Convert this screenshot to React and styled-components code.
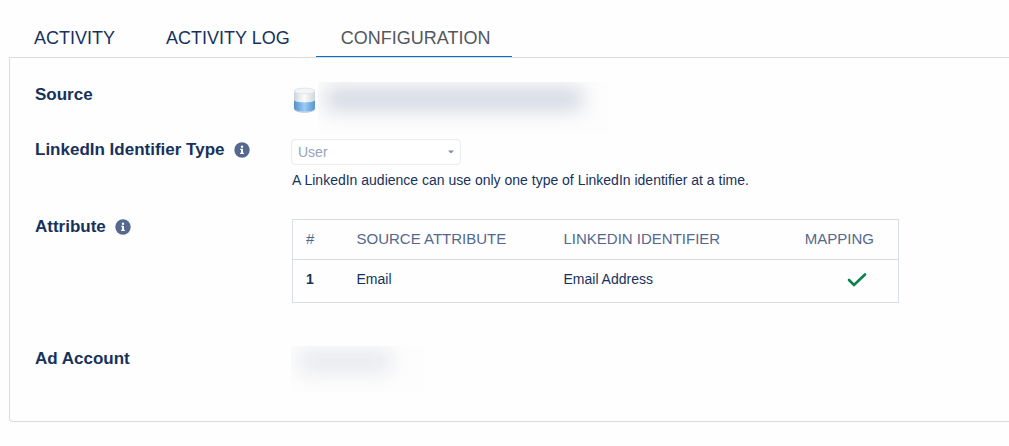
import React from 'react'
import styled, { createGlobalStyle } from 'styled-components'

const GlobalStyle = createGlobalStyle`
    * {
        box-sizing: border-box;
    }

    body {
        margin: 0;
        background: #fefefe;
        color: #16325c;
        font-family: "Liberation Sans", Arial, sans-serif;
        font-size: 14px;
        line-height: 20px;
    }
`

const Page = styled.main`
    padding: 18px 0 24px 9px;
`

const TabList = styled.nav`
    display: flex;
    gap: 4px;
`

const Tab = styled.a`
    height: 39px;
    padding: 0 22px 0 25px;
    border-bottom: 1px solid ${props => props.$active ? '#0070d2' : 'transparent'};
    color: ${props => props.$active ? '#54575c' : '#16325c'};
    font-size: 18px;
    line-height: 40px;
    text-decoration: none;
`

const Panel = styled.section`
    display: flex;
    flex-direction: column;
    padding: 24px 0 29px 25px;
    border: 1px solid #dddbda;
    border-right: none;
    border-radius: 0 0 0 4px;
`

const Field = styled.div`
    display: grid;
    grid-template-columns: 256px minmax(0, 1fr);
    min-height: ${props => props.$height}px;
`

const FieldName = styled.div`
    display: flex;
    align-items: center;
    align-self: start;
    gap: 9px;
    padding-top: ${props => props.$top || 0}px;
    font-size: 17px;
    font-weight: bold;
    line-height: 16px;
`

const InfoButton = styled.button`
    display: flex;
    padding: 0;
    border: none;
    background: none;
`

const SourceValue = styled.div`
    display: flex;
    align-items: flex-start;
    gap: 2px;
    padding-left: 2px;
`

const IconBox = styled.span`
    display: flex;
    padding-top: 5px;
`

const Redacted = styled.div`
    overflow: hidden;
    width: ${props => props.$width}px;
    height: ${props => props.$height}px;
    background: #fdfdfd;

    &::before {
        content: "";
        display: block;
        width: ${props => props.$smudge}px;
        height: 22px;
        margin: ${props => props.$top}px 0 0 8px;
        background: ${props => props.$color};
        filter: blur(10px);
    }
`

const SelectBox = styled.div`
    position: relative;
    width: 170px;
    height: 26px;
    margin-bottom: 5px;

    svg {
        position: absolute;
        top: 11px;
        right: 7px;
        pointer-events: none;
    }
`

const Select = styled.select`
    display: block;
    appearance: none;
    width: 100%;
    height: 100%;
    padding: 0 24px 0 6px;
    border: 1px solid #e8ebf0;
    border-radius: 4px;
    background: #fff;
    color: #96a3b9;
    font: inherit;
    opacity: 1;
`

const Help = styled.p`
    margin: 0;
    padding: 0 1px;
`

const TableBox = styled.div`
    max-width: 609px;
    padding: 0 1px;
`

const Table = styled.table`
    width: 100%;
    table-layout: fixed;
    border: 1px solid #d8dde6;
    border-collapse: collapse;
`

const HeadCell = styled.th`
    width: ${props => props.$width};
    height: 40px;
    padding: 0 13px 2px;
    border-bottom: 1px solid #d8dde6;
    color: #54698d;
    font-size: 15px;
    font-weight: normal;
    text-align: ${props => props.$align || 'left'};
    white-space: nowrap;

    &:last-child {
        padding-right: 24px;
    }
`

const Cell = styled.td`
    height: 43px;
    padding: 0 13px 4px;
    font-weight: ${props => props.$bold ? 'bold' : 'normal'};
    text-align: ${props => props.$align || 'left'};

    &:last-child {
        padding-right: 31px;
    }

    svg {
        display: inline-block;
        vertical-align: middle;
    }
`

function InfoIcon() {
    return (
        <svg width="16" height="16" viewBox="0 0 16 16" aria-hidden="true">
            <circle cx="8" cy="8" r="7.7" fill="#54698d" />
            <circle cx="8" cy="4.8" r="1.2" fill="#fff" />
            <path d="M6.3 6.8H9v4h.9v1.1H6.1v-1.1H7V7.9h-.7z" fill="#fff" />
        </svg>
    )
}

function DatabaseIcon() {
    return (
        <svg width="23" height="27" viewBox="0 0 23 27" aria-hidden="true">
            <defs>
                <linearGradient id="glass">
                    <stop offset="0" stopColor="#c9d3da" />
                    <stop offset=".25" stopColor="#e6ebee" />
                    <stop offset=".5" stopColor="#fbfcfc" />
                    <stop offset="1" stopColor="#cdd6dc" />
                </linearGradient>
                <linearGradient id="liquid">
                    <stop offset="0" stopColor="#5590cc" />
                    <stop offset=".5" stopColor="#9accf8" />
                    <stop offset="1" stopColor="#5795d2" />
                </linearGradient>
            </defs>
            <path d="M1 4v17.500c0 5 21 5 21 0V4z" fill="url(#glass)" />
            <path d="M1 13.500v8c0 4.400 21 4.400 21 0v-8c-3 2.500-18 2.500-21 0z" fill="url(#liquid)" />
            <path d="M1 21.500c0 5 21 5 21 0" fill="none" stroke="#b5c7d6" />
            <ellipse cx="11.500" cy="4" rx="10.300" ry="2.800" fill="#f3f5f6" stroke="#dfe4e7" />
        </svg>
    )
}

function CheckIcon() {
    return (
        <svg width="20" height="16" viewBox="0 0 20 16" role="img" aria-label="Mapped">
            <path d="M2 8l5 5L18 2.500" fill="none" stroke="#04844b" strokeWidth="2.600" strokeLinecap="round" />
        </svg>
    )
}

const tabs = ['ACTIVITY', 'ACTIVITY LOG', 'CONFIGURATION']

const mappings = [
    { source: 'Email', identifier: 'Email Address' },
]

function App() {
    return (
        <>
            <GlobalStyle />
            <Page>
                <TabList>
                    {tabs.map(tab => (
                        <Tab key={tab} href="#" $active={tab === 'CONFIGURATION'}>{tab}</Tab>
                    ))}
                </TabList>
                <Panel>
                    <Field $height={57}>
                        <FieldName $top={5}>Source</FieldName>
                        <SourceValue>
                            <IconBox><DatabaseIcon /></IconBox>
                            <Redacted $width={291} $height={50} $smudge={256} $top={6} $color="#d0d5e0" />
                        </SourceValue>
                    </Field>
                    <Field $height={80}>
                        <FieldName $top={3}>
                            <label htmlFor="identifier">LinkedIn Identifier Type</label>
                            <InfoButton type="button" aria-label="About identifier type"><InfoIcon /></InfoButton>
                        </FieldName>
                        <div>
                            <SelectBox>
                                <Select id="identifier" disabled>
                                    <option>User</option>
                                </Select>
                                <svg width="6" height="4" viewBox="0 0 6 4" aria-hidden="true">
                                    <path d="M0 .5h6L3 3.500z" fill="#7f8fa9" />
                                </svg>
                            </SelectBox>
                            <Help>A LinkedIn audience can use only one type of LinkedIn identifier at a time.</Help>
                        </div>
                    </Field>
                    <Field $height={127}>
                        <FieldName>
                            Attribute
                            <InfoButton type="button" aria-label="About attributes"><InfoIcon /></InfoButton>
                        </FieldName>
                        <TableBox>
                            <Table>
                                <thead>
                                    <tr>
                                        <HeadCell $width="51px">#</HeadCell>
                                        <HeadCell $width="207px">SOURCE ATTRIBUTE</HeadCell>
                                        <HeadCell>LINKEDIN IDENTIFIER</HeadCell>
                                        <HeadCell $width="141px" $align="right">MAPPING</HeadCell>
                                    </tr>
                                </thead>
                                <tbody>
                                    {mappings.map((mapping, index) => (
                                        <tr key={mapping.source}>
                                            <Cell $bold>{index + 1}</Cell>
                                            <Cell>{mapping.source}</Cell>
                                            <Cell>{mapping.identifier}</Cell>
                                            <Cell $align="right"><CheckIcon /></Cell>
                                        </tr>
                                    ))}
                                </tbody>
                            </Table>
                        </TableBox>
                    </Field>
                    <Field $height={40}>
                        <FieldName $top={5}>Ad Account</FieldName>
                        <Redacted $width={134} $height={46} $smudge={92} $top={4} $color="#e6e8ed" />
                    </Field>
                </Panel>
            </Page>
        </>
    )
}

export default App
